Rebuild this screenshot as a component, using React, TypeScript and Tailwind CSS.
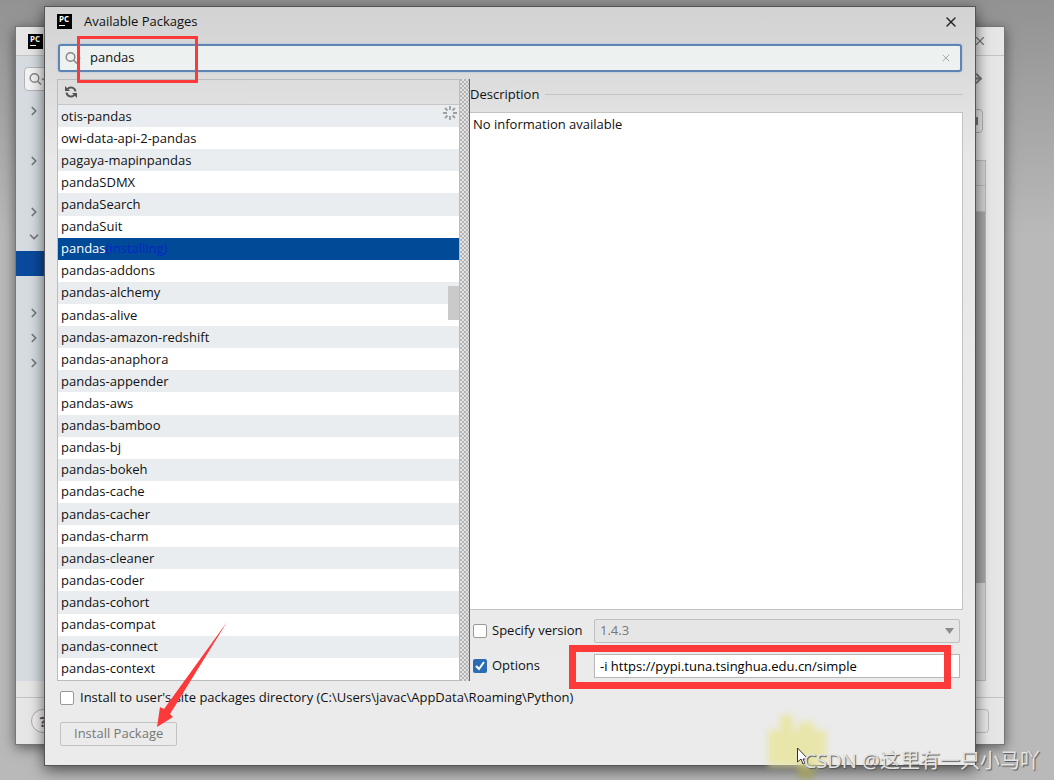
import { ChevronDown, ChevronRight, X, ArrowRight } from 'lucide-react'

const packages = [
  'otis-pandas',
  'owi-data-api-2-pandas',
  'pagaya-mapinpandas',
  'pandaSDMX',
  'pandaSearch',
  'pandaSuit',
  'pandas',
  'pandas-addons',
  'pandas-alchemy',
  'pandas-alive',
  'pandas-amazon-redshift',
  'pandas-anaphora',
  'pandas-appender',
  'pandas-aws',
  'pandas-bamboo',
  'pandas-bj',
  'pandas-bokeh',
  'pandas-cache',
  'pandas-cacher',
  'pandas-charm',
  'pandas-cleaner',
  'pandas-coder',
  'pandas-cohort',
  'pandas-compat',
  'pandas-connect',
  'pandas-context',
]

function PyCharmLogo() {
  return (
    <span className="flex h-[15px] w-[15px] shrink-0 flex-col bg-black pl-[2px] text-[8px] leading-[9px] font-bold text-white">
      PC
      <span className="mt-[2px] h-px w-[6px] bg-white" />
    </span>
  )
}

function SearchIcon() {
  return (
    <svg className="h-4 w-[18px] shrink-0" viewBox="0 0 18 16" fill="none" stroke="#858585">
      <circle cx="5.5" cy="7" r="4.3" strokeWidth="1.4" />
      <path d="M8.6 10.2 12 13.5" strokeWidth="1.6" />
      <path d="M12 7.5h4l-2 2z" fill="#858585" stroke="none" />
    </svg>
  )
}

function RefreshIcon() {
  return (
    <svg className="h-[14px] w-[14px]" viewBox="0 0 14 14" fill="none" stroke="#555" strokeWidth="2">
      <path d="M3.5 4.2A4.500 4.500 0 0 1 11.500 6.300" />
      <path d="M10.500 9.800A4.500 4.500 0 0 1 2.500 7.700" />
      <path d="M1 1v5h5z" fill="#555" stroke="none" />
      <path d="M13 13V8H8z" fill="#555" stroke="none" />
    </svg>
  )
}

function Spinner() {
  return (
    <svg className="absolute top-0 right-px h-4 w-4" viewBox="0 0 16 16" stroke="#9a9fa3" strokeWidth="1.8">
      <path d="M8 1v4M8 11v4M1 8h4M11 8h4M3 3l2.5 2.5M10.5 10.5 13 13M13 3l-2.5 2.5M5.5 10.5 3 13" />
    </svg>
  )
}

// Settings window that stays behind the dialog
function SettingsWindow() {
  return (
    <div className="absolute top-[26px] right-[49px] bottom-[35px] left-[15px] flex flex-col border border-[#777] bg-[#e6e6e6] shadow-[0_3px_12px_rgba(0,0,0,0.5)]">
      <div className="flex h-[29px] shrink-0 items-center justify-between border-b border-[#c4c4c4] pr-[17px] pl-3">
        <PyCharmLogo />
        <X size={14} strokeWidth={2} color="#777" />
      </div>
      <div className="flex flex-1 justify-between">
        <div className="flex w-20 flex-col bg-[#d5dbe1] pt-[11px]">
          <div className="ml-2 flex h-[24px] items-center rounded-sm border border-[#b5b5b5] bg-[#f3f3f3] pl-1">
            <SearchIcon />
          </div>
          <ChevronRight size={14} strokeWidth={3} color="#777" className="mt-[13px] ml-[11px]" />
          <ChevronRight size={14} strokeWidth={3} color="#777" className="mt-[36px] ml-[11px]" />
          <ChevronRight size={14} strokeWidth={3} color="#777" className="mt-[37px] ml-[11px]" />
          <ChevronDown size={14} strokeWidth={3} color="#777" className="mt-[11px] ml-[11px]" />
          <div className="mt-[7px] h-[25px] bg-[#0a4a9c]" />
          <ChevronRight size={14} strokeWidth={3} color="#777" className="mt-[30px] ml-[11px]" />
          <ChevronRight size={14} strokeWidth={3} color="#777" className="mt-[11px] ml-[11px]" />
          <ChevronRight size={14} strokeWidth={3} color="#777" className="mt-[11px] ml-[11px]" />
        </div>
        <div className="flex w-16 flex-col pt-[15px]">
          <ArrowRight size={15} strokeWidth={3} color="#777" className="ml-[29px]" />
          <div className="mt-[23px] mr-[21px] flex h-[24px] items-center justify-end rounded-sm border border-[#b0b0b0] bg-[#e8e8e8] pr-1">
            <span className="h-2 w-[2px] bg-[#777]" />
          </div>
          <div className="mt-[27px] mr-[18px] flex flex-1 flex-col border border-[#b8b8b8] bg-[#d2d2d2]">
            <div className="h-[25px] border-b border-[#b8b8b8]" />
            <div className="h-[26px] border-b border-[#b8b8b8]" />
            <div className="h-[371px] bg-[#a6a6a6]" />
          </div>
        </div>
      </div>
      <div className="mt-4 flex h-[47px] shrink-0 items-center justify-between border-t border-[#c4c4c4] pr-[15px] pl-[15px]">
        <button className="h-6 w-6 rounded-full border border-[#aaa] bg-[#eee] text-[15px] leading-5 font-bold text-[#555]">
          ?
        </button>
        <div className="h-[24px] w-16 rounded-sm border border-[#bbb]" />
      </div>
    </div>
  )
}

function PackageList() {
  return (
    <section className="flex w-[403px] shrink-0 flex-col border border-[#bcbcbc]">
      <div className="flex h-[25px] shrink-0 items-center border-b border-[#c6c6c6] pl-[6px]">
        <button aria-label="Reload packages">
          <RefreshIcon />
        </button>
      </div>
      <ul className="relative flex flex-1 flex-col">
        {packages.map((name, i) => {
          const selected = name === 'pandas'
          return (
            <li
              key={name}
              className={`flex flex-1 items-center pb-px pl-[3px] leading-5 ${
                selected ? 'bg-[#004a98] text-white' : i % 2 === 0 ? 'bg-[#eaedf0]' : 'bg-white'
              }`}
            >
              {name}
              {selected && <span className="text-[#0526c4]">(installing)</span>}
            </li>
          )
        })}
        <Spinner />
        <div className="absolute top-[181px] right-0 h-[34px] w-[11px] bg-[#cacaca]" />
      </ul>
    </section>
  )
}

function Details() {
  return (
    <section className="flex min-w-0 flex-1 flex-col border-l border-[#666]">
      <div className="flex h-[33px] shrink-0 items-center gap-[6px] pb-[2px]">
        <h2>Description</h2>
        <div className="h-px flex-1 bg-[#c2c2c2]" />
      </div>
      <div className="flex-1 border border-l-0 border-[#c2c2c2] bg-white px-[3px] py-px leading-5">
        No information available
      </div>
      <div className="mt-[9px] mr-[3px] flex h-[24px] shrink-0 items-center pl-[3px]">
        <label className="flex w-[121px] items-center gap-[5px]">
          <input
            type="checkbox"
            className="h-[14px] w-[14px] shrink-0 appearance-none rounded-xs border border-[#999] bg-white"
          />
          Specify version
        </label>
        <div className="relative flex-1">
          <select
            disabled
            aria-label="Version"
            className="block h-[24px] w-full appearance-none rounded-xs border border-[#bfbfbf] bg-[#e6e6e6] px-[5px] text-[#777]"
          >
            <option>1.4.3</option>
          </select>
          <svg className="absolute top-[9px] right-[6px] h-[6px] w-[9px]" viewBox="0 0 9 6" fill="#8c8c8c">
            <path d="M0 0h9L4.5 6z" />
          </svg>
        </div>
      </div>
      <div className="mt-[11px] mr-[3px] mb-[3px] flex h-[24px] shrink-0 items-center pl-[3px]">
        <label className="flex w-[121px] items-center gap-[5px]">
          <span className="relative flex">
            <input
              type="checkbox"
              defaultChecked
              className="h-[14px] w-[14px] appearance-none rounded-xs bg-[#2b6cb5]"
            />
            <svg
              className="pointer-events-none absolute inset-0"
              viewBox="0 0 14 14"
              fill="none"
              stroke="#fff"
              strokeWidth="2"
            >
              <path d="m3 7 3 3 5-7" />
            </svg>
          </span>
          Options
        </label>
        <input
          aria-label="Options"
          defaultValue="-i https://pypi.tuna.tsinghua.edu.cn/simple"
          className="h-[24px] min-w-0 flex-1 border border-[#b8b8b8] bg-white px-[5px] text-black outline-none"
        />
      </div>
    </section>
  )
}

function PackagesDialog() {
  return (
    <div className="absolute top-[6px] right-[78px] bottom-[14px] left-[44px] flex flex-col border border-[#555] bg-linear-to-b from-[#d2d2d2] via-[#e8e8e8] via-20% to-[#ebebeb] shadow-[0_4px_14px_rgba(0,0,0,0.6)]">
      <header className="flex h-[29px] shrink-0 items-center pr-[16px] pl-3">
        <PyCharmLogo />
        <h1 className="ml-3 flex-1">Available Packages</h1>
        <button aria-label="Close">
          <X size={16} strokeWidth={2} color="#222" />
        </button>
      </header>
      <div className="mt-[8px] mr-[13px] ml-[13px] flex h-[28px] shrink-0 items-center rounded-[3px] border-2 border-[#5d84b3] bg-[#edf2f1] pr-[8px] pl-[5px] shadow-[0_0_2px_#8fb6e0]">
        <SearchIcon />
        <input
          aria-label="Search packages"
          defaultValue="pandas"
          className="ml-[7px] min-w-0 flex-1 outline-none"
        />
        <button aria-label="Clear search">
          <X size={12} strokeWidth={2} color="#aaa" />
        </button>
      </div>
      <div className="mt-[7px] mr-3 ml-3 flex flex-1">
        <PackageList />
        <div className="w-[9px] shrink-0 bg-[#e2e2e2] bg-[radial-gradient(circle_at_1px_1px,#b4b4b4_1px,transparent_1px),radial-gradient(circle_at_3px_3px,#b4b4b4_1px,transparent_1px)] bg-size-[4px_4px]" />
        <Details />
      </div>
      <footer className="flex shrink-0 flex-col items-start pt-[7px] pb-[19px] pl-[15px]">
        <label className="flex h-5 items-center gap-[6px]">
          <input
            type="checkbox"
            className="h-[14px] w-[14px] appearance-none rounded-xs border border-[#999] bg-white"
          />
          Install to user's site packages directory (C:\Users\javac\AppData\Roaming\Python)
        </label>
        <button className="mt-[14px] h-[24px] rounded-xs border border-[#c2c2c2] px-[13px] text-[#777]">
          Install Package
        </button>
      </footer>
    </div>
  )
}

// Red marks, pointer and watermark drawn over the windows
function Annotations() {
  return (
    <div className="pointer-events-none absolute inset-0">
      <div className="absolute top-[36px] left-[77px] h-[47px] w-[121px] border-[3px] border-[#fc3a3a]" />
      <div className="absolute top-[645px] right-[103px] left-[569px] h-[44px] border-[7px] border-[#fc3a3a]" />
      <svg className="absolute top-[620px] left-[150px] h-[112px] w-20" viewBox="0 0 80 112" fill="#fc3a3a">
        <path d="M77 2 20 94l3 3L7 107l3-20 4 2z" />
      </svg>
      <svg
        className="absolute top-[708px] left-[760px] h-[72px] w-[76px] blur-[3px]"
        viewBox="0 0 76 72"
        fill="#e9e5a0"
        fillOpacity="0.85"
      >
        <path d="M8 22h12V7h13v15h5v-8h16v8h12v36H8z" />
        <path d="M38 58h16v13H38z" fill="#a3a15e" />
      </svg>
      <svg className="absolute top-[747px] left-[797px] h-[18px] w-3" viewBox="0 0 12 18" fill="#fff" stroke="#333">
        <path d="M.5 1v14L4 12l2 5 2-1-2-4h5z" />
      </svg>
      <p className="absolute right-[14px] bottom-[5px] text-[20px] leading-7 whitespace-nowrap text-[#e4e4e4] [text-shadow:1px_1px_1px_#555]">
        CSDN @这里有一只小马吖
      </p>
    </div>
  )
}

export default function App() {
  return (
    <main className="relative min-h-screen overflow-hidden bg-linear-to-b from-[#929292] via-[#b9b9b9] via-30% to-[#b9b9b9] font-['Open_Sans','Noto_Sans_CJK_SC',sans-serif] text-[13px] text-[#111]">
      <SettingsWindow />
      <PackagesDialog />
      <Annotations />
    </main>
  )
}
